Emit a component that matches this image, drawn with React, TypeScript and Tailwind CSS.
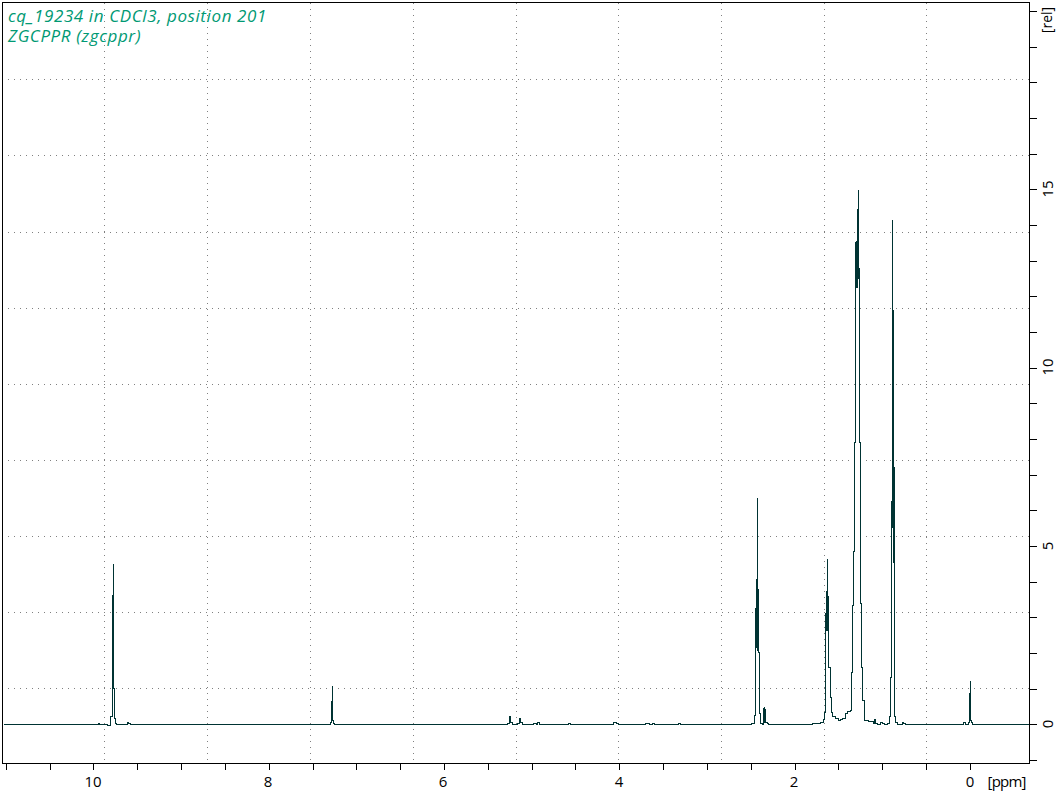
const spectrum = [
  'M3 724 H98 V723 H99 V724 H107 V725 H110 V716 H112 V688 V595 H113 V563 V688 H114 V718 H115 V723 H116 V724 H127 V722 H128 V723 H130 V724',
  'H330 V722 H331 V700 V720 H332 V685 V720 H333 V723 H334 V724',
  'H507 V723 H509 V715 V722 H510 V715 V722 H512 V724 H517 V723 H519 V718 H520 V722 H522 V724 H533 V723 H536 V724 H537 V722 H539 V724',
  'H568 V723 H570 V724 H613 V722 H616 V723 H618 V724 H645 V723 H649 V724 H652 V723 H654 V724 H678 V723 H680 V724',
  'H751 V723 H754 V715 H755 V608 H756 V578 V647 H757 V497 V650 H758 V588 V652 H759 V713 H760 V723 H762 V724 H763 V707 V722 H764 V706 V720 H765 V708 V722 H767 V723 H768 V724',
  'H812 V723 H820 V722 H823 V719 H824 V712 H825 V613 H826 V590 V630 H827 V558 V628 H828 V595 V667 H830 V697 H831 V712 H832 V716 H835 V718 H838 V720 H840 V719 H842 V718 H845 V713 H847 V711 H850 V710 H851 V672 H852 V605 H853 V551 H854 V442',
  'H855 V242 H856 V240 V287 H857 V208 V278 H858 V189 V268 H859 V442 H860 V603 H861 V667 H862 V700 H864 V720 H868 V721 H873 V723',
  'H874 V718 V723 H875 V718 V723 H877 V724 H880 V722 H882 V723 H884 V724 H887 V723 H889 V716 H890 V677 H891 V501 H892 V219 V527 H893 V309 V562 H894 V466 V716 H895 V722 H897 V724 H902 V722 H903 V723 H905 V724',
  'H963 V722 H965 V724 H968 V722 H969 V692 V720 H970 V680 V720 H971 V722 H972 V724 H1029',
].join(' ');

const gridX = [104, 207, 310, 413, 516, 618, 721, 824, 926];
const gridY = [79, 155, 232, 308, 384, 460, 536, 612, 688];
const tickY = Array.from({ length: 22 }, (_, i) => Math.round(760 - i * 35.67));
const tickX = Array.from({ length: 23 }, (_, i) => Math.round(5.7 + i * 43.83));
const xLabels = [
  { x: 93, t: '10' },
  { x: 268, t: '8' },
  { x: 443, t: '6' },
  { x: 619, t: '4' },
  { x: 794, t: '2' },
  { x: 970, t: '0' },
];
const yLabels = [
  { y: 724, t: '0' },
  { y: 546, t: '5' },
  { y: 367, t: '10' },
  { y: 189, t: '15' },
];

export default function App() {
  return (
    <div className="relative w-[1060px] h-[793px] bg-white overflow-hidden font-['Open_Sans',sans-serif]">
      <svg width="1060" height="793" className="block" shapeRendering="crispEdges">
        <g stroke="#808080" strokeWidth="1" strokeDasharray="1 5">
          {gridX.map((x) => (
            <line key={x} x1={x + 0.5} y1="3" x2={x + 0.5} y2="762" />
          ))}
          {gridY.map((y) => (
            <line key={y} x1="8" y1={y + 0.5} x2="1030" y2={y + 0.5} />
          ))}
        </g>
        <path d={spectrum} fill="none" stroke="#003333" strokeWidth="1" transform="translate(0.5 0.5)" />
        <rect x="2.5" y="2.5" width="1027" height="761" fill="none" stroke="#000" strokeWidth="1" />
        <g stroke="#000" strokeWidth="1">
          {tickY.map((y) => (
            <line key={y} x1="1030" y1={y + 0.5} x2="1037" y2={y + 0.5} />
          ))}
          {tickX.map((x) => (
            <line key={x} x1={x + 0.5} y1="764" x2={x + 0.5} y2="770" />
          ))}
        </g>
        <g className="text-[15px] fill-black font-normal" textAnchor="middle">
          {xLabels.map((l) => (
            <text key={l.t} x={l.x} y="787">
              {l.t}
            </text>
          ))}
          <text x="1007" y="787" textLength="39" lengthAdjust="spacing">
            [ppm]
          </text>
          {yLabels.map((l) => (
            <text key={l.t} transform={`translate(1053 ${l.y}) rotate(-90)`}>
              {l.t}
            </text>
          ))}
          <text className="text-[14px]" transform="translate(1052 20) rotate(-90)">
            [rel]
          </text>
        </g>
      </svg>
      <div className="absolute left-2 top-[6px] text-[17px] leading-[20px] italic font-normal text-[#009973] tracking-[0.6px]">
        <div>cq_19234 in CDCl3, position 201</div>
        <div>ZGCPPR (zgcppr)</div>
      </div>
    </div>
  );
}
